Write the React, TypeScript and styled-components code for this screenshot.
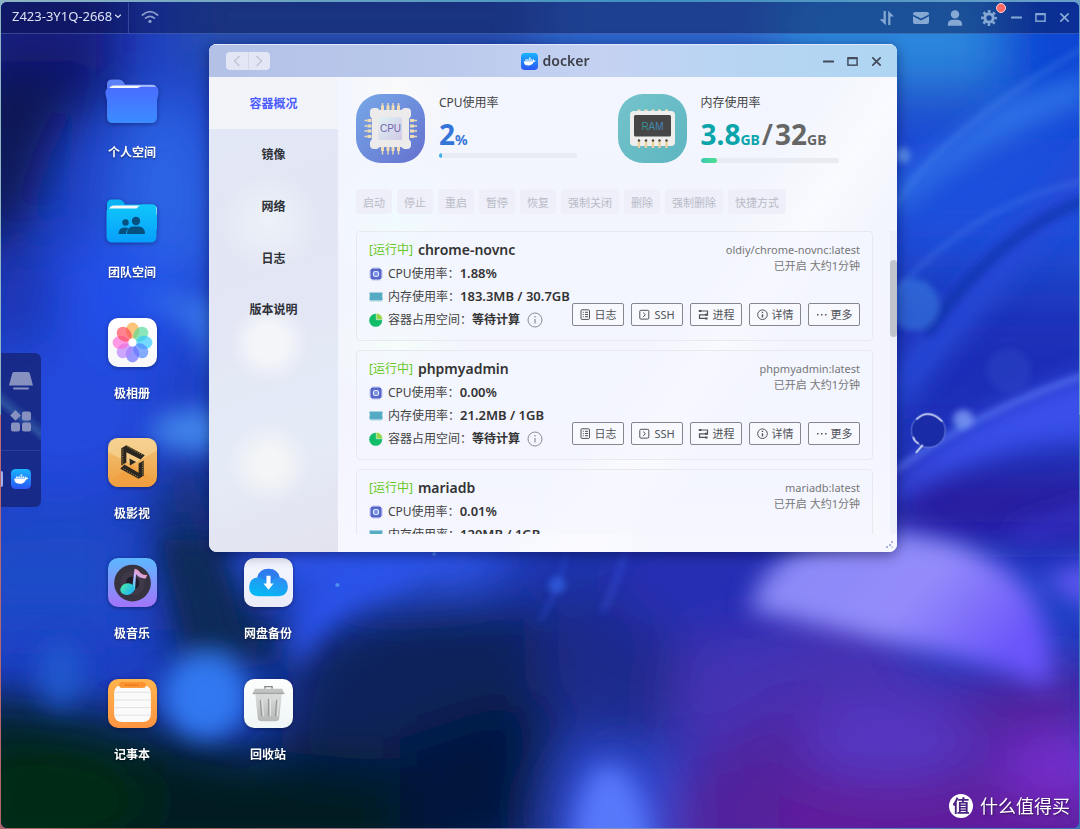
import React, { ReactElement, ReactNode, useState } from 'react'
import styled, { createGlobalStyle, css } from 'styled-components'

const GlobalStyle = createGlobalStyle`
  *, *::before, *::after {
    box-sizing: border-box;
  }

  body {
    margin: 0;
    font-family: 'Noto Sans', 'Noto Sans CJK SC', sans-serif;
    font-size: 12px;
    color: #333;
  }

  button {
    font: inherit;
    color: inherit;
    background: none;
    border: none;
    padding: 0;
    margin: 0;
    cursor: pointer;
  }

  h1, h2, p, ul, dl, dd {
    margin: 0;
    padding: 0;
  }

  svg {
    display: block;
    flex: none;
  }
`

/* ---------- shell ---------- */

const Frame = styled.div`
  display: flex;
  min-height: 100vh;
  padding: 2px 1px 1px;
  background: linear-gradient(100deg, #b86a78 0%, #9a5a4a 20%, #8a8fc0 55%, #3a74b8 100%) bottom / 100% 50% no-repeat,
    linear-gradient(90deg, #8fb4c4, #3f90c0 60%, #6aa0c8);
`

const Desktop = styled.div`
  position: relative;
  flex: 1;
  display: flex;
  flex-direction: column;
  min-width: 0;
  min-height: 640px;
  border-radius: 6px;
  overflow: hidden;
  background: #1c38a8;
`

const WallpaperSvg = styled.svg`
  position: absolute;
  inset: 0;
  width: 100%;
  height: 100%;
`

const TopBar = styled.header`
  position: relative;
  display: flex;
  align-items: center;
  height: 32px;
  color: #dde3f4;
  background: rgba(8, 18, 70, 0.45);
  border-bottom: 1px solid rgba(120, 160, 240, 0.35);
`

const DeviceButton = styled.button`
  display: flex;
  align-items: center;
  gap: 2px;
  height: 30px;
  padding: 0 6px 4px 11px;
  border-right: 1px solid rgba(140, 160, 220, 0.3);
  font-size: 13px;
  line-height: 18px;
`

const StatusIcon = styled.div`
  padding: 0 12px 2px;
  color: #8b9ccb;
`

const ToolGroup = styled.div`
  display: flex;
  align-items: center;
  margin-left: auto;
  color: #86a9d4;
`

const ToolButton = styled.button`
  position: relative;
  display: grid;
  place-items: center;
  width: 34px;
  height: 30px;
`

const Dot = styled.span`
  position: absolute;
  top: 0;
  right: 0;
  width: 10px;
  height: 10px;
  border: 1px solid #ffd0cc;
  border-radius: 50%;
  background: #f96a68;
`

const WindowControls = styled.div<{ $muted?: boolean }>`
  display: flex;
  gap: 4px;
  justify-self: end;
  padding-right: ${props => (props.$muted ? 5 : 11)}px;
  color: ${props => (props.$muted ? '#86a9d4' : 'inherit')};
`

const ControlButton = styled.button`
  display: grid;
  place-items: center;
  width: 20px;
  height: 20px;
`

/* ---------- desktop icons ---------- */

const IconGrid = styled.main`
  position: relative;
  flex: 1;
  display: grid;
  grid-auto-flow: column;
  grid-template-rows: repeat(6, 1fr);
  grid-auto-columns: 96px;
  column-gap: 40px;
  padding: 43px 0 29px 83px;
`

const Shortcut = styled.button<{ $column: number; $row: number }>`
  grid-column: ${props => props.$column};
  grid-row: ${props => props.$row};
  display: flex;
  flex-direction: column;
  align-items: center;
  align-self: start;
  gap: 18px;
  color: #fff;
  font-weight: 700;
  line-height: 18px;
  text-shadow: 0 1px 2px rgba(0, 0, 0, 0.5);

  svg {
    filter: drop-shadow(0 1px 2px rgba(0, 0, 30, 0.4));
  }
`

const Dock = styled.nav`
  position: absolute;
  left: 0;
  top: 351px;
  display: flex;
  flex-direction: column;
  align-items: center;
  width: 40px;
  padding-top: 8px;
  border-radius: 0 6px 6px 0;
  background: linear-gradient(40deg, transparent 45%, rgba(80, 150, 200, 0.35) 50%, transparent 58%) 0 0 / 100% 130px no-repeat,
    rgba(22, 34, 112, 0.75);
`

const DockButton = styled.button<{ $running?: boolean }>`
  position: relative;
  display: grid;
  place-items: center;
  width: 40px;
  height: 40px;

  ${props =>
    props.$running &&
    css`
      margin-top: 9px;
      border-top: 1px solid rgba(120, 140, 200, 0.2);
      height: 57px;

      &::before {
        content: '';
        position: absolute;
        left: 0;
        width: 2px;
        height: 16px;
        border-radius: 0 2px 2px 0;
        background: #9fb2ee;
      }
    `}
`

/* ---------- docker window ---------- */

const Window = styled.section`
  position: absolute;
  top: 42px;
  left: 208px;
  right: 182px;
  bottom: 276px;
  display: flex;
  flex-direction: column;
  overflow: hidden;
  border-radius: 8px;
  background: #f4f6ff;
  box-shadow: 0 3px 14px rgba(0, 0, 40, 0.45), inset 0 1px 0 rgba(255, 255, 255, 0.8);
`

const TitleBar = styled.header`
  display: grid;
  grid-template-columns: 1fr auto 1fr;
  align-items: center;
  height: 33px;
  padding-left: 4px;
  color: #444b5c;
  border-top: 1px solid #e2e8f8;
  background: linear-gradient(90deg, #b3c1e7 0%, #b7c7ea 25%, #c5d2f2 58%, #b8d5f3 75%, #aed5f2 100%);
`

const HistoryButtons = styled.div`
  display: flex;
  width: 44px;
  margin-left: 13px;
  border-radius: 4px;
  overflow: hidden;
  background: #e3e7f5;
  color: #c3c7d2;
`

const HistoryButton = styled.button`
  display: grid;
  place-items: center;
  flex: 1;
  height: 18px;

  & + & {
    border-left: 1px solid #d3d8ea;
  }
`

const Title = styled.h1`
  display: flex;
  align-items: center;
  gap: 5px;
  color: #3c3f48;
  font-size: 14px;
  font-weight: 600;
  line-height: 20px;
`

const WindowBody = styled.div`
  flex: 1;
  display: flex;
  min-height: 0;
`

const SideNav = styled.nav`
  flex: none;
  width: 129px;
  background: radial-gradient(circle 50px at 60px 145px, rgba(242, 248, 250, 0.6) 10%, transparent),
    radial-gradient(circle 40px at 60px 266px, rgba(246, 247, 250, 0.9) 40%, transparent),
    radial-gradient(circle 42px at 60px 387px, rgba(247, 247, 246, 0.85) 30%, transparent),
    linear-gradient(160deg, #e2e8f6 0%, #e3e6f4 45%, #e4ebf7 75%, #e3e3ef 100%);
`

const NavList = styled.div`
  display: grid;
  grid-template-rows: repeat(5, 1fr);
  height: 258px;
`

const NavItem = styled.button<{ $active: boolean }>`
  font-weight: 700;
  color: ${props => (props.$active ? '#4a5bff' : '#2f3138')};
  background: ${props => (props.$active ? '#f3f4fa' : 'transparent')};
`

const Content = styled.div`
  flex: 1;
  display: flex;
  flex-direction: column;
  min-width: 0;
  padding: 17px 0 18px 18px;
  background: radial-gradient(circle 60px at 60px 20px, rgba(252, 251, 250, 0.8), transparent),
    radial-gradient(circle 70px at 60px 150px, rgba(240, 252, 255, 0.9), transparent),
    radial-gradient(circle 70px at 60px 270px, rgba(245, 255, 250, 0.9), transparent),
    linear-gradient(125deg, transparent 55%, rgba(252, 252, 255, 0.7) 64%, transparent 72%),
    linear-gradient(180deg, #f3f6fe, #f3f4fe 70%, #f7f8ff);
`

const Stats = styled.div`
  display: grid;
  grid-template-columns: 1fr 1fr;
  padding-right: 18px;
`

const Stat = styled.div`
  display: flex;
  gap: 14px;
`

const StatInfo = styled.div`
  width: 138px;
`

const StatLabel = styled.p`
  line-height: 18px;
  color: #444;
`

const Figures = styled.p<{ $tall?: boolean }>`
  display: flex;
  align-items: baseline;
  height: ${props => (props.$tall ? 46 : 41)}px;
  padding-top: 2px;
  line-height: 40px;
  white-space: nowrap;
`

const Amount = styled.span<{ $color: string }>`
  color: ${props => props.$color};
  font-size: 28px;
  font-weight: 700;

  small {
    font-size: 14px;
  }
`

const Slash = styled.span`
  padding: 0 2px;
  color: #666;
  font-size: 28px;
  font-weight: 600;
`

const Track = styled.div`
  height: 5px;
  border-radius: 3px;
  background: #e9ebf3;
  overflow: hidden;
`

const Fill = styled.div<{ $tone: string }>`
  height: 100%;
  border-radius: 3px;
  background: ${props => props.$tone};
`

const ActionBar = styled.div`
  display: flex;
  gap: 5px;
  padding: 26px 0 17px;
`

const ActionButton = styled.button`
  height: 25px;
  padding: 0 7px;
  border-radius: 4px;
  color: #b9bbc6;
  background: #eeeff9;
  font-size: 11px;
  white-space: nowrap;

  &:disabled {
    cursor: default;
  }
`

const ListArea = styled.div`
  flex: 1;
  display: flex;
  min-height: 0;
`

const List = styled.ul`
  flex: 1;
  display: flex;
  flex-direction: column;
  gap: 9px;
  min-width: 0;
  overflow: hidden;
  list-style: none;
`

const ScrollTrack = styled.div`
  width: 7px;
  margin-left: 17px;
  padding-top: 29px;
  background: rgba(230, 232, 242, 0.4);
`

const ScrollThumb = styled.div`
  height: 77px;
  border-radius: 4px;
  background: #c1c3cb;
`

const Card = styled.li`
  flex: none;
  display: flex;
  justify-content: space-between;
  padding: 6px 12px 9px;
  border: 1px solid #e8e9ef;
  border-radius: 4px;
  background: rgba(244, 245, 255, 0.5);
`

const CardInfo = styled.div`
  flex: 1 1 0;
  min-width: 0;
  white-space: nowrap;
`

const CardTitle = styled.h2`
  display: flex;
  align-items: center;
  gap: 5px;
  font-size: 14px;
  font-weight: 600;
  line-height: 24px;
`

const State = styled.span`
  color: #69c81e;
  font-size: 12px;
  font-weight: 400;
`

const Metric = styled.div`
  display: flex;
  align-items: center;
  line-height: 23px;

  dt {
    padding-left: 5px;
    color: #444;
  }

  dd {
    display: flex;
    align-items: center;
    font-size: 13px;
    font-weight: 600;
  }
`

const Pending = styled.span`
  margin-right: 7px;
  font-size: 12px;
`

const CardSide = styled.div`
  flex: none;
  display: flex;
  flex-direction: column;
  align-items: flex-end;
  padding: 4px 0 5px;
  color: #777;
  font-size: 11px;
  line-height: 16px;
`

const CardButtons = styled.div`
  display: flex;
  gap: 7px;
  margin-top: auto;
`

const CardButton = styled.button`
  display: flex;
  align-items: center;
  justify-content: center;
  gap: 4px;
  width: 52px;
  height: 23px;
  border: 1px solid #85878f;
  border-radius: 2px;
  color: #505258;
  background: rgba(250, 251, 255, 0.6);
  white-space: nowrap;
`

const ResizeHandle = styled.svg`
  position: absolute;
  right: 2px;
  bottom: 2px;
`

const Watermark = styled.div`
  position: absolute;
  right: 9px;
  bottom: 8px;
  display: flex;
  align-items: center;
  gap: 7px;
  color: #fff;
  font-size: 18px;
  line-height: 28px;
  text-shadow: 1px 1px 2px rgba(0, 0, 0, 0.5);
`

const WatermarkBadge = styled.span`
  width: 24px;
  height: 24px;
  border-radius: 50%;
  color: #4a2382;
  background: #fff;
  font-size: 17px;
  font-weight: 700;
  line-height: 23px;
  text-align: center;
  text-shadow: none;
`

/* ---------- drawings ---------- */

const Wallpaper = () => (
  <WallpaperSvg viewBox='0 0 1080 829' preserveAspectRatio='none' aria-hidden>
    <defs>
      <filter id='soft' x='-50%' y='-50%' width='200%' height='200%'>
        <feGaussianBlur stdDeviation='26' />
      </filter>
      <filter id='mid' x='-50%' y='-50%' width='200%' height='200%'>
        <feGaussianBlur stdDeviation='12' />
      </filter>
      <filter id='fine' x='-50%' y='-50%' width='200%' height='200%'>
        <feGaussianBlur stdDeviation='3' />
      </filter>
      <linearGradient id='petal' x1='0' y1='0' x2='1' y2='0.5'>
        <stop offset='0' stopColor='#8688f6' />
        <stop offset='0.6' stopColor='#958cfb' />
        <stop offset='1' stopColor='#6a55fa' />
      </linearGradient>
    </defs>
    <rect width='1080' height='829' fill='#1e3fc4' />
    <g filter='url(#soft)'>
      <rect x='-40' y='-40' width='160' height='150' fill='#151b80' />
      <path d='M-40 60 L90 60 L50 150 L20 240 L-40 260 Z' fill='#0e1352' />
      <rect x='180' y='-40' width='360' height='110' fill='#2650ae' />
      <rect x='540' y='-40' width='240' height='110' fill='#2f68cc' />
      <rect x='780' y='-40' width='220' height='130' fill='#2a86dc' />
      <rect x='1000' y='-40' width='140' height='180' fill='#0c46d4' />
      <ellipse cx='165' cy='200' rx='60' ry='110' fill='#2a62e4' />
      <ellipse cx='100' cy='310' rx='90' ry='70' fill='#2450ea' />
      <ellipse cx='20' cy='300' rx='40' ry='60' fill='#1c36b4' />
      <ellipse cx='60' cy='420' rx='110' ry='80' fill='#2348dc' />
      <ellipse cx='190' cy='510' rx='36' ry='60' fill='#13307c' />
      <rect x='-40' y='520' width='170' height='110' fill='#1e4cc8' />
      <path d='M160 510 L250 530 L290 660 L180 680 Z' fill='#092656' />
      <ellipse cx='390' cy='555' rx='170' ry='42' fill='#2e56ee' />
      <ellipse cx='600' cy='570' rx='110' ry='56' fill='#1c36b0' />
      <path d='M300 650 L360 610 L430 590 L560 610 L560 860 L240 860 Z' fill='#07235a' />
      <ellipse cx='630' cy='660' rx='90' ry='90' fill='#1c2a8c' />
      <ellipse cx='800' cy='700' rx='130' ry='110' fill='#4432b4' />
      <ellipse cx='720' cy='580' rx='110' ry='60' fill='#272db4' />
      <path d='M-40 690 L120 720 L250 750 L470 770 L470 880 L-40 880 Z' fill='#031c20' />
      <ellipse cx='40' cy='800' rx='110' ry='60' fill='#032b12' />
      <path d='M400 740 L520 700 L530 860 L400 860 Z' fill='#06153e' />
      <path d='M640 800 L800 700 L1100 660 L1100 880 L660 880 Z' fill='#51239c' />
      <ellipse cx='890' cy='740' rx='90' ry='40' fill='#5438c4' />
      <ellipse cx='1060' cy='770' rx='60' ry='30' fill='#7b32da' />
      <rect x='880' y='120' width='240' height='140' fill='#1f50dc' />
      <rect x='880' y='300' width='240' height='140' fill='#1a2fb8' />
      <rect x='880' y='470' width='240' height='70' fill='#29199c' />
      <rect x='780' y='790' width='340' height='60' fill='#641a9c' />
      <ellipse cx='612' cy='820' rx='62' ry='70' fill='#3450d8' />
    </g>
    <g filter='url(#mid)'>
      <ellipse cx='200' cy='430' rx='50' ry='22' fill='#3f82ea' />
      <path d='M110 290 Q200 300 220 400 L230 300 Z' fill='#3672e8' />
      <ellipse cx='60' cy='675' rx='24' ry='34' fill='#205cd0' opacity='0.8' />
      <ellipse cx='205' cy='696' rx='42' ry='44' fill='#3178f0' />
      <path d='M160 540 L215 540 L240 630 L300 650 L190 655 Z' fill='#0a2a5a' />
      <path d='M290 650 Q298 560 430 548 L400 585 Q330 600 298 670 Z' fill='#2b52ea' />
      <path d='M572 870 Q575 775 608 765 Q645 775 656 870 Z' fill='#5878fa' />
      <path d='M750 610 Q770 540 860 530 Q970 530 1025 585 Q1060 630 1050 690 Q1000 665 900 645 Q840 630 750 610 Z' fill='url(#petal)' />
      <path d='M1040 580 L1100 560 L1100 620 L1080 600 Z' fill='#6558f4' />
      <path d='M880 500 Q960 410 1100 370 L1100 440 Q980 440 880 510 Z' fill='#3a50ea' />
      <path d='M1010 530 L1100 500 L1100 520 L1020 545 Z' fill='#3432c4' />
      <path d='M890 190 L1000 100 L1090 70 L1090 100 Q960 150 890 220 Z' fill='#2e70e6' />
      <path d='M890 370 Q960 290 1100 130 L1100 170 Q980 320 890 420 Z' fill='#2748d6' />
    </g>
    <g filter='url(#fine)' fill='none' strokeLinecap='round'>
      <path d='M896 205 Q940 130 1084 46' stroke='#69a8f6' strokeWidth='3' opacity='0.4' />
      <path d='M896 290 Q980 200 1084 180' stroke='#5088f0' strokeWidth='5' opacity='0.35' />
      <path d='M930 330 Q1000 230 1084 200' stroke='#0f2094' strokeWidth='12' opacity='0.4' />
      <path d='M896 470 Q980 410 1084 375' stroke='#6684fa' strokeWidth='6' opacity='0.6' />
      <path d='M540 620 Q560 590 566 552' stroke='#2c4ed4' strokeWidth='3' opacity='0.7' />
      <path d='M604 610 Q618 580 626 552' stroke='#3c58e4' strokeWidth='8' opacity='0.3' />
      <circle cx='914' cy='304' r='26' fill='#3d8ae8' opacity='0.5' />
      <circle cx='1010' cy='370' r='22' fill='#3552cc' opacity='0.3' />
      <circle cx='903' cy='154' r='8' fill='#8cc4fa' opacity='0.5' />
      <circle cx='964' cy='419' r='10' fill='#7e9cf6' opacity='0.8' />
      <circle cx='557' cy='585' r='9' fill='#3565ea' opacity='0.6' />
    </g>
    <circle cx='929' cy='430' r='17' fill='#1a2ba8' stroke='#b9c8fb' strokeWidth='1' strokeOpacity='0.5' />
    <path d='M917 419 Q929 407 943 421' fill='none' stroke='#e3eaff' strokeWidth='1.4' />
    <path d='M914 437 Q915 441 919 443M923 445 L917 452' fill='none' stroke='#e8eeff' strokeWidth='1.6' strokeLinecap='round' />
    <circle cx='337' cy='585' r='2' fill='#5aa8f4' opacity='0.8' />
    <circle cx='434' cy='554' r='2' fill='#5aa8f4' opacity='0.6' />
  </WallpaperSvg>
)

const DockerLogo = ({ size }: { size: number }) => (
  <svg width={size} height={size} viewBox='0 0 20 20' aria-hidden>
    <defs>
      <linearGradient id='dockerTile' x1='0' y1='0' x2='0' y2='1'>
        <stop offset='0' stopColor='#18b4ff' />
        <stop offset='1' stopColor='#2b55f5' />
      </linearGradient>
    </defs>
    <rect width='20' height='20' rx='4.5' fill='url(#dockerTile)' />
    <path
      d='M3.4 9.6 H13.6 C14 9.1 13.9 8 14.6 7.2 C15.3 7.7 15.5 8.3 15.4 9 C16.2 8.7 17 8.9 17.3 9.3 C16.8 10.2 15.9 10.5 15 10.4 C13.9 13.4 11.7 14.8 8.5 14.8 C4.9 14.8 3.2 12.8 3.4 9.6 Z'
      fill='#fff'
    />
    <path d='M5 7.4h1.8v1.8H5z M7.2 7.4H9v1.8H7.2z M9.4 7.4h1.8v1.8H9.4z M11.5 7.4h1.8v1.8h-1.8z M9.4 5.4h1.8v1.7H9.4z' fill='#e6f1ff' />
  </svg>
)

const Minimize = () => (
  <svg width='11' height='11' viewBox='0 0 12 12'>
    <path d='M1 6h10' stroke='currentColor' strokeWidth='2.4' strokeLinecap='round' />
  </svg>
)

const Maximize = () => (
  <svg width='11' height='11' viewBox='0 0 12 12'>
    <rect x='1' y='2' width='10' height='8' fill='none' stroke='currentColor' strokeWidth='1.6' />
    <path d='M1 2.4h10' stroke='currentColor' strokeWidth='2.2' />
  </svg>
)

const Close = () => (
  <svg width='11' height='11' viewBox='0 0 12 12'>
    <path d='M2 2l8 8M10 2l-8 8' stroke='currentColor' strokeWidth='1.9' strokeLinecap='round' />
  </svg>
)

const Wifi = () => (
  <svg width='18' height='14' viewBox='0 0 18 14' fill='none' stroke='currentColor' strokeWidth='1.7' strokeLinecap='round'>
    <path d='M1.4 5Q9-1.8 16.6 5M4.6 8.2Q9 4.4 13.4 8.2' />
    <circle cx='9' cy='11.4' r='1.7' fill='currentColor' stroke='none' />
  </svg>
)

const Chevron = () => (
  <svg width='8' height='8' viewBox='0 0 8 8' fill='none' stroke='currentColor' strokeWidth='1.2'>
    <path d='M1.2 2.8L4 5.4l2.8-2.6' />
  </svg>
)

const Transfer = () => (
  <svg width='16' height='16' viewBox='0 0 16 16' fill='currentColor'>
    <path d='M4.6 1h2.2v14.2L1 9.6h3.6zM9.2 15V.8L15 6.4h-3.6V15z' />
    <rect x='1.6' y='9' width='2' height='2' rx='1' />
  </svg>
)

const Mail = () => (
  <svg width='16' height='14' viewBox='0 0 16 14' fill='currentColor'>
    <path d='M2 1h12q2 0 2 2v.4L8 7.6 0 3.4V3q0-2 2-2z' />
    <path d='M0 5.2l8 4.2 8-4.2V11q0 2-2 2H2q-2 0-2-2z' />
  </svg>
)

const Person = () => (
  <svg width='16' height='16' viewBox='0 0 16 16' fill='currentColor'>
    <circle cx='8' cy='4.4' r='4.2' />
    <path d='M.8 15.8q-.3-6 4.6-6h5.2q4.9 0 4.6 6z' />
  </svg>
)

const Gear = () => (
  <svg width='16' height='16' viewBox='0 0 16 16'>
    <circle cx='8' cy='8' r='4.2' fill='none' stroke='currentColor' strokeWidth='3' />
    <circle cx='8' cy='8' r='6.6' fill='none' stroke='currentColor' strokeWidth='2.6' strokeDasharray='2.6 2.58' strokeDashoffset='1.3' />
  </svg>
)

const Folder = ({ team = false }: { team?: boolean }) => {
  const id = team ? 'teamFolder' : 'homeFolder'
  return (
    <svg width='54' height='49' viewBox='0 0 54 49'>
      <defs>
        <linearGradient id={id} x1='0' y1='0' x2='0' y2='1'>
          <stop offset='0' stopColor={team ? '#10c6fb' : '#4a6cff'} />
          <stop offset='1' stopColor={team ? '#079ffb' : '#3b8cff'} />
        </linearGradient>
      </defs>
      <path d='M2 12V7q0-4.5 5-4.5h7q3 0 4.6 2.5l1.4 2.5h27q5 0 5 5v20H2z' fill={team ? '#08b4f6' : '#5b80f8'} />
      <path d='M4 12.5q1-4 5-4h39q3 0 4 3v6H4z' fill='#f4f6f8' />
      {team ? (
        <path d='M1.5 14q1-2.5 4-2.5h26l3-3q1-1 3-1h9q5 0 5 5v27q0 6-6 6h-38q-6 0-6-6z' fill={`url(#${id})`} />
      ) : (
        <path d='M.5 17q-.6-6 4-6h28l3.5-1.5h13q5 0 4.5 6.5l-1.5 8v16q0 6-6 6H8q-6 0-6-6V24z' fill={`url(#${id})`} />
      )}
      {team && (
        <g fill='#06507f'>
          <circle cx='20.5' cy='25.5' r='3.2' />
          <path d='M13.5 37q0-6.5 6-6.5 3 0 4 1-2.5 2-2.5 5.5z' />
          <circle cx='31' cy='24' r='4.2' />
          <path d='M22 37q0-7.5 6.5-7.5h5q6.5 0 6.5 7.5z' />
        </g>
      )}
    </svg>
  )
}

const Tile = ({ id, from, to, children }: { id: string; from: string; to: string; children: ReactNode }) => (
  <svg width='49' height='49' viewBox='0 0 48 48'>
    <defs>
      <linearGradient id={id} x1='0' y1='0' x2='0' y2='1'>
        <stop offset='0' stopColor={from} />
        <stop offset='1' stopColor={to} />
      </linearGradient>
    </defs>
    <rect width='48' height='48' rx='10' fill={`url(#${id})`} />
    {children}
  </svg>
)

const petals = ['#ffa83e', '#52dc9a', '#32c8ff', '#4e86ff', '#6a6cff', '#b880ff', '#ff6ad6', '#ff4a5a']

const Photos = () => (
  <Tile id='photos' from='#ffffff' to='#f7f7f9'>
    {petals.map((color, index) => (
      <ellipse
        key={color}
        cx='24'
        cy='12.5'
        rx='6.6'
        ry='8'
        fill={color}
        fillOpacity='0.68'
        transform={`rotate(${index * 45} 24 24)`}
      />
    ))}
    <circle cx='24' cy='24' r='3.8' fill='#fff' />
  </Tile>
)

const Movies = () => (
  <Tile id='movies' from='#f4c67c' to='#ee9e3e'>
    <path d='M0 14L24 26 48 12V10Q48 0 38 0H10Q0 0 0 10z' fill='#f7d89c' opacity='0.6' />
    <path d='M2 42L24 26 46 42Q44 48 38 48H10Q4 48 2 42z' fill='#f0a040' opacity='0.8' />
    <g fill='#292720'>
      <path d='M13 10l5-3 18 10-4 4-14-7v10l-5 3z' />
      <path d='M35 22v15l-5 3-18-10 4-4 14 8V25z' />
      <path d='M21 20l6.5 3.5-6 3.5z' />
    </g>
    <path d='M14.5 11v15M34 24v14M19 8.5l15 8.5M15 30l15 8.5' stroke='#e9b15c' strokeWidth='0.7' strokeDasharray='1 1.2' />
  </Tile>
)

const Music = () => (
  <Tile id='music' from='#5db8ff' to='#a274fa'>
    <defs>
      <linearGradient id='note' x1='0.7' y1='0' x2='0.2' y2='1'>
        <stop offset='0' stopColor='#ff8d8a' />
        <stop offset='0.45' stopColor='#c9b0ff' />
        <stop offset='1' stopColor='#3bd8e8' />
      </linearGradient>
      <linearGradient id='noteHead' x1='0' y1='0' x2='1' y2='1'>
        <stop offset='0' stopColor='#4df0a4' />
        <stop offset='1' stopColor='#18a8ff' />
      </linearGradient>
    </defs>
    <circle cx='24' cy='24.5' r='18' fill='#37323f' />
    <circle cx='24' cy='24.5' r='12' fill='#3f3947' />
    <circle cx='24' cy='24.5' r='6.5' fill='#1f1b2b' />
    <path d='M26 10.5q3 0 4.5 2.5 2.5 4 8 3.5l-1.5 3.5q-6 .5-9.5-4L26.5 31h-3z' fill='url(#note)' />
    <ellipse cx='19' cy='30.5' rx='7' ry='5.6' fill='url(#noteHead)' transform='rotate(-15 19 30.5)' />
  </Tile>
)

const CloudBackup = () => (
  <Tile id='cloud' from='#f4f7ff' to='#eaebf8'>
    <defs>
      <linearGradient id='cloudShape' x1='0.8' y1='0' x2='0.4' y2='1'>
        <stop offset='0' stopColor='#3e7bf2' />
        <stop offset='1' stopColor='#06b8f4' />
      </linearGradient>
    </defs>
    <path d='M14 37.5Q5 37 5 28.5 5.5 19.5 13 19 15 10.5 24 10.5T35 19Q43 20 43 28.5 42.5 37 34 37.5z' fill='url(#cloudShape)' />
    <path d='M24 10.5q9 0 11 8.5-8 0-9 8-5-8-13-8 2-8.5 11-8.5z' fill='#2d6de8' opacity='0.45' />
    <path d='M22 17.5h4v7.5h3L24 31l-5-6h3z' fill='#fff' />
  </Tile>
)

const Notes = () => (
  <Tile id='notes' from='#ffb44e' to='#fd9440'>
    <path d='M6 15q0-8 5-8.5l3 2h20l3-2q5 .5 5 8.5v19q0 8-8 8H14q-8 0-8-8z' fill='#fafafa' />
    <path d='M7 13h34M6 20.5h36M6 28h36M7 35.5h34' stroke='#dcdcdf' strokeWidth='0.8' />
    <rect x='11' y='3' width='26' height='5.5' rx='2.5' fill='#fb9330' />
    <path d='M17 6h13' stroke='#e57818' strokeWidth='1.6' strokeDasharray='1.6 0.7' />
  </Tile>
)

const Trash = () => (
  <Tile id='trash' from='#fdfdfd' to='#eff6f6'>
    <defs>
      <linearGradient id='bin' x1='0' y1='0' x2='0' y2='1'>
        <stop offset='0' stopColor='#dcdedd' />
        <stop offset='1' stopColor='#b5b8b7' />
      </linearGradient>
    </defs>
    <path d='M20.5 9.5V7.5h7v2' fill='none' stroke='#858887' strokeWidth='1.4' />
    <path d='M11 14h26l-2.5 24.5q-.4 3-3.5 3H17q-3.1 0-3.5-3z' fill='url(#bin)' />
    <path d='M10.5 9.5h27l2 5.5h-31z' fill='#bfc2c1' />
    <path d='M8.5 14h31' stroke='#a2a5a4' strokeWidth='1.2' />
    <path d='M16 21l1.2 15M24 20v16M32 21l-1.2 15' stroke='#989c9b' strokeWidth='1.3' fill='none' strokeLinecap='round' />
    <path d='M18 21l1 15M26 20v16M34 21l-1.2 15' stroke='#eceeed' strokeWidth='0.8' fill='none' strokeLinecap='round' />
  </Tile>
)

const CpuBadge = () => (
  <svg width='69' height='69' viewBox='0 0 69 69'>
    <defs>
      <linearGradient id='cpuBadge' x1='0' y1='0' x2='1' y2='1'>
        <stop offset='0' stopColor='#77a8e8' />
        <stop offset='1' stopColor='#6471cf' />
      </linearGradient>
      <linearGradient id='cpuDie' x1='0' y1='0' x2='1' y2='1'>
        <stop offset='0' stopColor='#dff2f2' />
        <stop offset='1' stopColor='#cfc9e6' />
      </linearGradient>
    </defs>
    <rect width='69' height='69' rx='25' fill='url(#cpuBadge)' />
    {[26.5, 32, 37, 42.5].map(pos => (
      <g key={pos} stroke='#f0dcb4' strokeWidth='3'>
        <path d={`M${pos} 11.5v5M${pos} 53v4M11.5 ${pos}h4M54 ${pos}h4`} />
        <path d={`M${pos} 9v3M${pos} 57v3.5M8.5 ${pos}h3M58 ${pos}h3`} strokeWidth='1.4' />
      </g>
    ))}
    <path
      d='M14 18q0-4 4-4h3l3 2h21l3-2h3q4 0 4 4v4l-2 3v20l2 3v3q0 4-4 4h-3l-3-2H24l-3 2h-3q-4 0-4-4v-3l2-3V25l-2-3z'
      fill='#eceaea'
    />
    <rect x='22.5' y='23' width='23.5' height='23' rx='1' fill='url(#cpuDie)' />
    <text x='34.5' y='38' textAnchor='middle' fontSize='10' fontFamily='Liberation Sans, sans-serif' fill='#7564b0'>
      CPU
    </text>
  </svg>
)

const RamBadge = () => (
  <svg width='69' height='69' viewBox='0 0 69 69'>
    <defs>
      <linearGradient id='ramBadge' x1='0' y1='0' x2='1' y2='1'>
        <stop offset='0' stopColor='#74c4cc' />
        <stop offset='1' stopColor='#5eb5c0' />
      </linearGradient>
      <linearGradient id='ramText' x1='0' y1='0' x2='1' y2='0'>
        <stop offset='0' stopColor='#35938c' />
        <stop offset='1' stopColor='#4c80c8' />
      </linearGradient>
    </defs>
    <rect width='69' height='69' rx='25' fill='url(#ramBadge)' />
    <path d='M21 18v-2.5M28 18v-2.5M35 18v-2.5M41.5 18v-2.5M48.5 18v-2.5' stroke='#f0dfb9' strokeWidth='3' />
    <rect x='12' y='17' width='45' height='35' rx='4' fill='#efeeec' />
    <rect x='16' y='21' width='37' height='21.5' rx='1.5' fill='#464646' />
    {[21, 28, 35, 41.5, 48.5].map(x => (
      <g key={x}>
        <path d={`M${x} 46v8`} stroke='#ecd0a0' strokeWidth='2.4' />
        <circle cx={x} cy='46.5' r='1.2' fill='#4c4840' />
      </g>
    ))}
    <text x='34.5' y='36' textAnchor='middle' fontSize='10' fontFamily='Liberation Sans, sans-serif' fill='url(#ramText)'>
      RAM
    </text>
  </svg>
)

const CpuIcon = () => (
  <svg width='14' height='14' viewBox='0 0 14 14'>
    <path d='M4 0v14M6 0v14M8 0v14M10 0v14M0 4h14M0 6h14M0 8h14M0 10h14' stroke='#a9b0e2' strokeWidth='0.7' />
    <rect x='1.5' y='1.5' width='11' height='11' rx='2' fill='#5667cb' />
    <rect x='4.5' y='4.5' width='5' height='5' rx='1.8' fill='#7c93ea' stroke='#e5eaff' strokeWidth='1.2' />
  </svg>
)

const RamIcon = () => (
  <svg width='14' height='14' viewBox='0 0 14 14'>
    <path d='M2 11.4h10' stroke='#a5d6de' strokeWidth='1' strokeDasharray='1 0.8' />
    <path d='M.5 2.5h13V5q-1 1 0 2v3.5H.5V7q1-1 0-2z' fill='#55abc4' />
  </svg>
)

const DiskIcon = () => (
  <svg width='14' height='14' viewBox='0 0 14 14'>
    <circle cx='6.7' cy='7.3' r='6.5' fill='#12bd6a' />
    <path d='M7.3.3a6.5 6.5 0 0 1 6.4 6.4H7.3z' fill='#9ad447' stroke='#eafbe6' strokeWidth='0.6' />
  </svg>
)

const InfoIcon = () => (
  <svg width='16' height='16' viewBox='0 0 16 16' fill='none' stroke='#8b8d93'>
    <circle cx='8' cy='8' r='7' />
    <path d='M8 7v4.5M8 4v1.5' strokeWidth='1.2' />
  </svg>
)

const cardActions: { label: string; icon: ReactElement }[] = [
  {
    label: '日志',
    icon: (
      <>
        <rect x='1' y='0.8' width='8.5' height='9.6' rx='1' />
        <path d='M2.8 3.3h1M2.8 5.5h1M2.8 7.7h1M5 3.3h3M5 5.5h3M5 7.7h3' />
      </>
    ),
  },
  {
    label: 'SSH',
    icon: (
      <>
        <rect x='0.8' y='1.3' width='9' height='8.8' rx='1' />
        <path d='M4.2 3.6l2.2 2.1-2.2 2.1' />
      </>
    ),
  },
  {
    label: '进程',
    icon: (
      <>
        <path d='M3 2h6.5v3.8H1.5v3.6H7' strokeWidth='1.2' />
        <path d='M.8 2h2.6M7 5.8h2.6M7 9.4h2.6' strokeWidth='2' />
      </>
    ),
  },
  {
    label: '详情',
    icon: (
      <>
        <circle cx='5.5' cy='5.7' r='4.8' />
        <path d='M5.5 5.2v3.3M5.5 2.8v1.3' strokeWidth='1.4' />
      </>
    ),
  },
  {
    label: '更多',
    icon: <path d='M1 5.7h9.5' strokeWidth='1.5' strokeDasharray='1.5 2.5' />,
  },
]

/* ---------- data ---------- */

const shortcuts = [
  { name: '个人空间', column: 1, row: 1, icon: <Folder /> },
  { name: '团队空间', column: 1, row: 2, icon: <Folder team /> },
  { name: '极相册', column: 1, row: 3, icon: <Photos /> },
  { name: '极影视', column: 1, row: 4, icon: <Movies /> },
  { name: '极音乐', column: 1, row: 5, icon: <Music /> },
  { name: '记事本', column: 1, row: 6, icon: <Notes /> },
  { name: '网盘备份', column: 2, row: 5, icon: <CloudBackup /> },
  { name: '回收站', column: 2, row: 6, icon: <Trash /> },
]

const tabs = ['容器概况', '镜像', '网络', '日志', '版本说明']

const actions = ['启动', '停止', '重启', '暂停', '恢复', '强制关闭', '删除', '强制删除', '快捷方式']

const containers = [
  { name: 'chrome-novnc', image: 'oldiy/chrome-novnc:latest', cpu: '1.88%', memory: '183.3MB / 30.7GB' },
  { name: 'phpmyadmin', image: 'phpmyadmin:latest', cpu: '0.00%', memory: '21.2MB / 1GB' },
  { name: 'mariadb', image: 'mariadb:latest', cpu: '0.01%', memory: '120MB / 1GB' },
]

const ContainerCard = ({ name, image, cpu, memory }: (typeof containers)[number]): ReactElement => (
  <Card>
    <CardInfo>
      <CardTitle>
        <State>[运行中]</State>
        {name}
      </CardTitle>
      <dl>
        <Metric>
          <CpuIcon />
          <dt>CPU使用率：</dt>
          <dd>{cpu}</dd>
        </Metric>
        <Metric>
          <RamIcon />
          <dt>内存使用率：</dt>
          <dd>{memory}</dd>
        </Metric>
        <Metric>
          <DiskIcon />
          <dt>容器占用空间：</dt>
          <dd>
            <Pending>等待计算</Pending>
            <InfoIcon />
          </dd>
        </Metric>
      </dl>
    </CardInfo>
    <CardSide>
      <p>{image}</p>
      <p>已开启 大约1分钟</p>
      <CardButtons>
        {cardActions.map(({ label, icon }) => (
          <CardButton key={label} type='button'>
            <svg width='11' height='11' viewBox='0 0 11 11' fill='none' stroke='currentColor'>
              {icon}
            </svg>
            {label}
          </CardButton>
        ))}
      </CardButtons>
    </CardSide>
  </Card>
)

const DockerWindow = (): ReactElement => {
  const [activeTab, setActiveTab] = useState(tabs[0])

  return (
    <Window>
      <TitleBar>
        <HistoryButtons>
          <HistoryButton type='button' aria-label='后退'>
            <svg width='8' height='12' viewBox='0 0 8 12' fill='none' stroke='currentColor' strokeWidth='1.5'>
              <path d='M6.5 1l-5 5 5 5' />
            </svg>
          </HistoryButton>
          <HistoryButton type='button' aria-label='前进'>
            <svg width='8' height='12' viewBox='0 0 8 12' fill='none' stroke='currentColor' strokeWidth='1.5'>
              <path d='M1.5 1l5 5-5 5' />
            </svg>
          </HistoryButton>
        </HistoryButtons>
        <Title>
          <DockerLogo size={17} />
          docker
        </Title>
        <WindowControls>
          <ControlButton type='button' aria-label='最小化'>
            <Minimize />
          </ControlButton>
          <ControlButton type='button' aria-label='最大化'>
            <Maximize />
          </ControlButton>
          <ControlButton type='button' aria-label='关闭'>
            <Close />
          </ControlButton>
        </WindowControls>
      </TitleBar>
      <WindowBody>
        <SideNav>
          <NavList>
            {tabs.map(tab => (
              <NavItem key={tab} type='button' $active={tab === activeTab} onClick={() => setActiveTab(tab)}>
                {tab}
              </NavItem>
            ))}
          </NavList>
        </SideNav>
        <Content>
          <Stats>
            <Stat>
              <CpuBadge />
              <StatInfo>
                <StatLabel>CPU使用率</StatLabel>
                <Figures>
                  <Amount $color='#3575d8'>
                    2<small>%</small>
                  </Amount>
                </Figures>
                <Track>
                  <Fill $tone='#3fb0ee' style={{ width: '2%' }} />
                </Track>
              </StatInfo>
            </Stat>
            <Stat>
              <RamBadge />
              <StatInfo>
                <StatLabel>内存使用率</StatLabel>
                <Figures $tall>
                  <Amount $color='#0aa5ab'>
                    3.8<small>GB</small>
                  </Amount>
                  <Slash>/</Slash>
                  <Amount $color='#666'>
                    32<small>GB</small>
                  </Amount>
                </Figures>
                <Track>
                  <Fill $tone='linear-gradient(90deg, #3cc8b4, #4ee08e)' style={{ width: '12%' }} />
                </Track>
              </StatInfo>
            </Stat>
          </Stats>
          <ActionBar>
            {actions.map(action => (
              <ActionButton key={action} type='button' disabled>
                {action}
              </ActionButton>
            ))}
          </ActionBar>
          <ListArea>
            <List>
              {containers.map(container => (
                <ContainerCard key={container.name} {...container} />
              ))}
            </List>
            <ScrollTrack>
              <ScrollThumb />
            </ScrollTrack>
          </ListArea>
        </Content>
      </WindowBody>
      <ResizeHandle width='10' height='10' viewBox='0 0 10 10' fill='#a9b4dc'>
        <rect x='6' y='1' width='2' height='2' />
        <rect x='4' y='4' width='2' height='2' />
        <rect x='1' y='6' width='2' height='2' />
        <rect x='6' y='6' width='2' height='2' opacity='0.5' />
      </ResizeHandle>
    </Window>
  )
}

const App = (): ReactElement => (
  <Frame>
    <GlobalStyle />
    <Desktop>
      <Wallpaper />
      <TopBar>
        <DeviceButton type='button'>
          Z423-3Y1Q-2668
          <Chevron />
        </DeviceButton>
        <StatusIcon>
          <Wifi />
        </StatusIcon>
        <ToolGroup>
          <ToolButton type='button' aria-label='传输'>
            <Transfer />
          </ToolButton>
          <ToolButton type='button' aria-label='消息'>
            <Mail />
          </ToolButton>
          <ToolButton type='button' aria-label='用户'>
            <Person />
          </ToolButton>
          <ToolButton type='button' aria-label='设置'>
            <Gear />
            <Dot />
          </ToolButton>
        </ToolGroup>
        <WindowControls $muted>
          <ControlButton type='button' aria-label='最小化'>
            <Minimize />
          </ControlButton>
          <ControlButton type='button' aria-label='最大化'>
            <Maximize />
          </ControlButton>
          <ControlButton type='button' aria-label='关闭'>
            <Close />
          </ControlButton>
        </WindowControls>
      </TopBar>
      <IconGrid>
        {shortcuts.map(({ name, column, row, icon }) => (
          <Shortcut key={name} type='button' $column={column} $row={row}>
            {icon}
            {name}
          </Shortcut>
        ))}
      </IconGrid>
      <Dock>
        <DockButton type='button' aria-label='桌面'>
          <svg width='24' height='18' viewBox='0 0 24 18' fill='#8791c0'>
            <path d='M5 0h14q1.5 0 1.8 1.5L24 13.5H0L3.2 1.5Q3.5 0 5 0z' />
            <rect x='4' y='15.5' width='16' height='2' rx='1' />
          </svg>
        </DockButton>
        <DockButton type='button' aria-label='应用'>
          <svg width='22' height='22' viewBox='0 0 22 22' fill='#8791c0'>
            <path d='M5.5 0l5.3 5.5-5.3 5.3L.2 5.5z' />
            <rect x='12' y='1.5' width='9' height='9' rx='2' />
            <rect x='1' y='12.5' width='9' height='9' rx='2' />
            <rect x='12' y='12.5' width='9' height='9' rx='2' />
          </svg>
        </DockButton>
        <DockButton type='button' aria-label='docker' $running>
          <DockerLogo size={20} />
        </DockButton>
      </Dock>
      <DockerWindow />
      <Watermark>
        <WatermarkBadge>值</WatermarkBadge>
        什么值得买
      </Watermark>
    </Desktop>
  </Frame>
)

export default App
